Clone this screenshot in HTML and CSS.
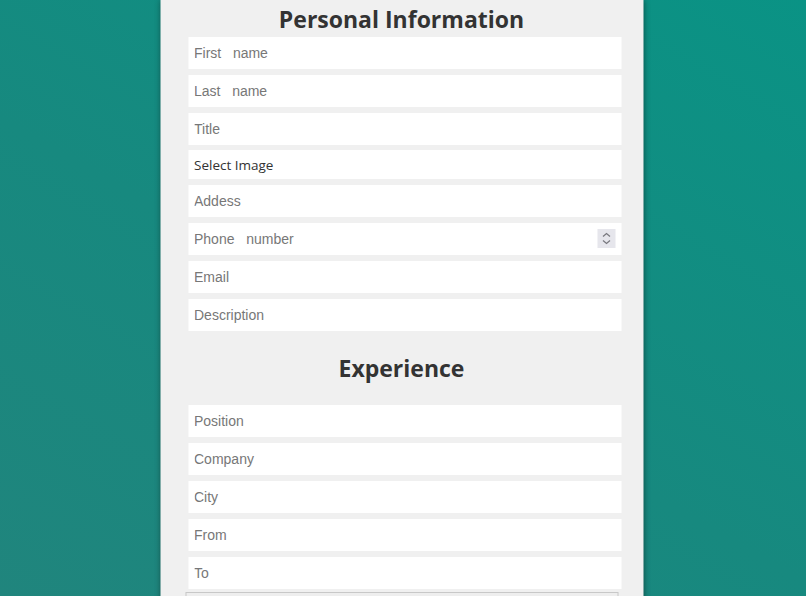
FILE: index.html
```html
<!DOCTYPE html>
<html lang="en">
<head>
    <meta charset="UTF-8">
    <meta name="viewport" content="width=device-width, initial-scale=1.0">
    <title>Resume Builder</title>
    <link rel="stylesheet" href="styles.css">
</head>
<body>
    <div class="panel">
        <h2>Personal Information</h2>
        <div class="fields">
            <input type="text" placeholder="First   name">
            <input type="text" placeholder="Last   name">
            <input type="text" placeholder="Title">
            <label class="file-label" for="photo">Select Image</label>
            <input type="file" id="photo" class="hidden">
            <input type="text" placeholder="Addess">
            <div class="number-wrap">
                <input type="number" placeholder="Phone   number">
                <span class="spinner">
                    <svg width="18" height="19" viewBox="0 0 18 19">
                        <path d="M5.5 7.5 L9 4.5 L12.5 7.5" fill="none" stroke="#7a7a80" stroke-width="1.3"/>
                        <path d="M5.5 11.5 L9 14.5 L12.5 11.5" fill="none" stroke="#7a7a80" stroke-width="1.3"/>
                    </svg>
                </span>
            </div>
            <input type="email" placeholder="Email">
            <input type="text" placeholder="Description">
        </div>

        <h2 class="section">Experience</h2>
        <div class="fields">
            <input type="text" placeholder="Position">
            <input type="text" placeholder="Company">
            <input type="text" placeholder="City">
            <input type="text" placeholder="From">
            <input type="text" placeholder="To">
            <textarea class="notes"></textarea>
        </div>
    </div>
</body>
</html>
```

FILE: styles.css
```css
html, body {
    height: 100%;
}
body {
    margin: 0;
    padding: 0;
    overflow: hidden;
    background: linear-gradient(30deg, #20857d 0%, #17897f 45%, #0a9385 100%);
    font-family: "Liberation Sans", Arial, sans-serif;
    color: #333;
}
.panel {
    width: 483px;
    min-height: 100%;
    margin: 0 auto;
    background-color: #f0f0f0;
    box-shadow: 0 0 6px rgba(0, 0, 0, 0.45);
    transform: translateX(-1.5px);
}
h2 {
    margin: 0;
    padding-top: 4px;
    height: 33px;
    font-family: "Open Sans", sans-serif;
    font-weight: 700;
    font-size: 23px;
    line-height: 30px;
    text-align: center;
    color: #333;
}
h2.section {
    padding-top: 22px;
    height: 52px;
}
.fields {
    display: flex;
    flex-direction: column;
    gap: 6px;
    padding-left: 28px;
}
input[type="text"], input[type="number"], input[type="email"] {
    box-sizing: border-box;
    width: 433px;
    height: 32px;
    margin: 0;
    padding: 0 6px;
    border: none;
    outline: none;
    background: #fff;
    font-family: "Liberation Sans", Arial, sans-serif;
    font-size: 14px;
    color: #333;
}
input::placeholder {
    color: #777;
    white-space: pre;
}
input[type="number"] {
    -moz-appearance: textfield;
}
input[type="number"]::-webkit-inner-spin-button,
input[type="number"]::-webkit-outer-spin-button {
    -webkit-appearance: none;
    margin: 0;
}
.number-wrap {
    position: relative;
    width: 433px;
    height: 32px;
}
.spinner {
    position: absolute;
    top: 6px;
    right: 6px;
    width: 18px;
    height: 19px;
    background: #e6e6ec;
}
.spinner svg {
    display: block;
}
.file-label {
    box-sizing: border-box;
    width: 433px;
    height: 29px;
    margin-top: -1px;
    padding: 0 6px;
    background: #fff;
    font-family: "Open Sans", sans-serif;
    font-size: 13.5px;
    line-height: 30px;
    color: #333;
}
.hidden {
    display: none;
}
.notes {
    box-sizing: border-box;
    width: 433px;
    height: 60px;
    margin: -3px 0 0 -3px;
    border: 1px solid #c8c8c8;
    background: #eee;
    resize: none;
}
```
